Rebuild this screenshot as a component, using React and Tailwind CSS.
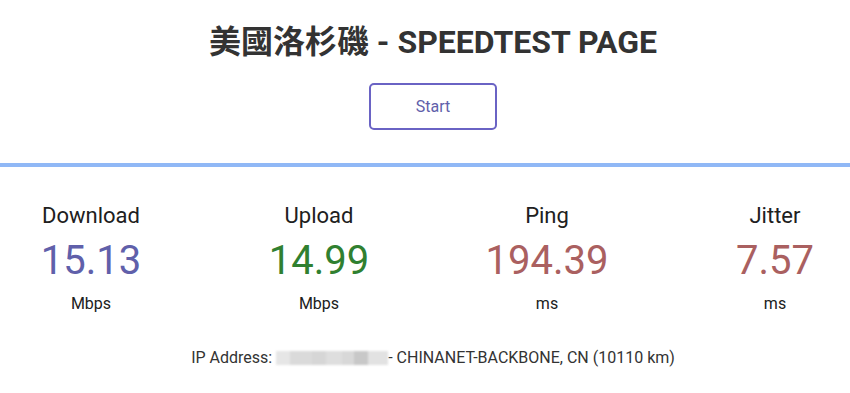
export default function App() {
  const items = [
    { label: "Download", value: "15.13", unit: "Mbps", color: "text-[#6060AA]" },
    { label: "Upload", value: "14.99", unit: "Mbps", color: "text-[#308030]" },
    { label: "Ping", value: "194.39", unit: "ms", color: "text-[#AA6060]" },
    { label: "Jitter", value: "7.57", unit: "ms", color: "text-[#AA6060]" },
  ];
  return (
    <div className="w-[850px] h-[393px] overflow-hidden bg-white text-[#202020]" style={{ fontFamily: "Roboto, 'Noto Sans CJK TC', sans-serif" }}>
      <div className="pl-[16px]">
        <h1 className="text-center font-bold text-[32px] leading-[38px] text-[#333] pt-[23px]">美國洛杉磯 - SPEEDTEST PAGE</h1>
        <div className="flex justify-center mt-[22px]">
          <button className="w-[128px] h-[47px] border-2 border-[#6a63c4] rounded-[5px] text-[16px] text-[#6060AA]">Start</button>
        </div>
      </div>
      <div className="mt-[33px] h-[4px] bg-[#90b8f6]"></div>
      <div className="flex pl-[16px] gap-[78px] mt-[36px]">
        {items.map((it) => (
          <div key={it.label} className="w-[150px] flex flex-col items-center">
            <div className="text-[22px] leading-[26px] text-[#202020]">{it.label}</div>
            <div className={`text-[40px] leading-[64px] ${it.color}`}>{it.value}</div>
            <div className="text-[16px] leading-[20px] mt-[1px] text-[#202020]">{it.unit}</div>
          </div>
        ))}
      </div>
      <div className="flex justify-center items-center pl-[16px] mt-[34px] text-[16px] leading-[20px] text-[#333]">
        <span>IP Address:&nbsp;</span>
        <span className="flex h-[14px] blur-[1px]">
          <span className="w-[14px] bg-[#e6e6e6]"></span>
          <span className="w-[22px] bg-[#dadada]"></span>
          <span className="w-[14px] bg-[#d6d6d6]"></span>
          <span className="w-[16px] bg-[#dedede]"></span>
          <span className="w-[12px] bg-[#d8d8d8]"></span>
          <span className="w-[14px] bg-[#c8c8c8]"></span>
          <span className="w-[20px] bg-[#e2e2e2]"></span>
        </span>
        <span>- CHINANET-BACKBONE, CN (10110 km)</span>
      </div>
    </div>
  );
}
